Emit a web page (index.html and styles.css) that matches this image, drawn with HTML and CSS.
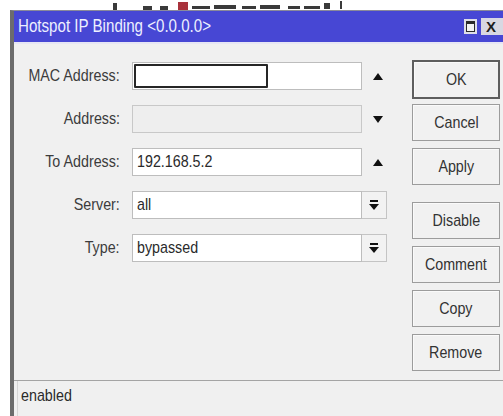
FILE: index.html
```html
<!DOCTYPE html>
<html>
<head>
<meta charset="utf-8">
<title>Hotspot IP Binding</title>
<link rel="stylesheet" href="styles.css">
</head>
<body>
<div class="strip">
  <span class="frag frag-a"></span>
  <span class="frag frag-b"></span>
  <span class="frag frag-c"></span>
  <span class="frag frag-red"></span>
  <span class="frag frag-t1"></span>
  <span class="frag frag-t2"></span>
  <span class="frag frag-t3"></span>
  <span class="frag frag-t4"></span>
  <span class="frag frag-t5"></span>
  <span class="frag frag-t6"></span>
  <span class="frag frag-t7"></span>
  <span class="frag frag-t8"></span>
</div>
<div class="window">
  <div class="titlebar">
    <span class="title"><span class="cx">Hotspot IP Binding &lt;0.0.0.0&gt;</span></span>
    <div class="tb-btns">
      <span class="tb-max"><span class="tb-max-inner"></span></span>
      <span class="tb-close">X</span>
    </div>
  </div>
  <div class="panel">
    <div class="form">
      <div class="row">
        <span class="label"><span class="cx">MAC Address:</span></span>
        <div class="field"><span class="mac-part"></span></div>
        <span class="spin"><svg width="10" height="7" viewBox="0 0 10 7"><polygon points="5,0 10,7 0,7" fill="#111"/></svg></span>
      </div>
      <div class="row">
        <span class="label"><span class="cx">Address:</span></span>
        <div class="field disabled"></div>
        <span class="spin"><svg width="10" height="7" viewBox="0 0 10 7"><polygon points="0,0 10,0 5,7" fill="#111"/></svg></span>
      </div>
      <div class="row">
        <span class="label"><span class="cx">To Address:</span></span>
        <div class="field"><span class="cx">192.168.5.2</span></div>
        <span class="spin"><svg width="10" height="7" viewBox="0 0 10 7"><polygon points="5,0 10,7 0,7" fill="#111"/></svg></span>
      </div>
      <div class="row">
        <span class="label"><span class="cx">Server:</span></span>
        <div class="field"><span class="cx">all</span></div>
        <span class="drop"><svg width="10" height="12" viewBox="0 0 10 12"><rect x="1" y="1" width="8" height="2" fill="#111"/><polygon points="0,5 10,5 5,11" fill="#111"/></svg></span>
      </div>
      <div class="row">
        <span class="label"><span class="cx">Type:</span></span>
        <div class="field"><span class="cx">bypassed</span></div>
        <span class="drop"><svg width="10" height="12" viewBox="0 0 10 12"><rect x="1" y="1" width="8" height="2" fill="#111"/><polygon points="0,5 10,5 5,11" fill="#111"/></svg></span>
      </div>
    </div>
    <div class="buttons">
      <div class="btn btn-default"><span class="cx">OK</span></div>
      <div class="btn"><span class="cx">Cancel</span></div>
      <div class="btn"><span class="cx">Apply</span></div>
      <div class="btn btn-spaced"><span class="cx">Disable</span></div>
      <div class="btn"><span class="cx">Comment</span></div>
      <div class="btn"><span class="cx">Copy</span></div>
      <div class="btn"><span class="cx">Remove</span></div>
    </div>
  </div>
  <div class="status"><span class="status-cell"><span class="cx">enabled</span></span></div>
</div>
</body>
</html>
```
FILE: styles.css
```css
html, body {
  margin: 0;
  padding: 0;
}

body {
  width: 503px;
  height: 416px;
  overflow: hidden;
  background: #ffffff;
  font-family: "Liberation Sans", Arial, sans-serif;
  font-size: 17px;
  color: #333;
}

/* condensed dialog lettering */
.cx {
  display: inline-block;
  white-space: nowrap;
  transform: scaleX(0.84);
  transform-origin: left center;
}

/* edge of the window list behind the dialog */
.strip {
  height: 10px;
  display: flex;
  align-items: flex-end;
  padding-left: 113px;
  overflow: hidden;
}

.frag {
  display: block;
  background: #3a3a3a;
  margin-right: 4px;
}

.frag-a { width: 4px; height: 7px; margin-right: 26px; }
.frag-b { width: 9px; height: 4px; margin-right: 8px; }
.frag-c { width: 8px; height: 4px; margin-right: 10px; }
.frag-red { width: 10px; height: 8px; background: #a8323c; }
.frag-t1 { width: 18px; height: 3px; margin-bottom: 1px; }
.frag-t2 { width: 22px; height: 4px; margin-bottom: 1px; margin-right: 6px; }
.frag-t3 { width: 14px; height: 3px; margin-bottom: 1px; }
.frag-t4 { width: 20px; height: 4px; margin-bottom: 1px; margin-right: 8px; }
.frag-t5 { width: 12px; height: 3px; margin-bottom: 1px; }
.frag-t6 { width: 16px; height: 3px; margin-bottom: 1px; }
.frag-t7 { width: 6px; height: 6px; margin-bottom: 1px; }
.frag-t8 { width: 2px; height: 8px; margin-bottom: 1px; margin-left: 6px; }

/* dialog window */
.window {
  margin-left: 10px;
  border-left: 4px solid #6c6c6c;
  border-top: 1px solid #8a8a9a;
  height: 406px;
  display: flex;
  flex-direction: column;
  background: #f0f0f0;
}

.titlebar {
  height: 31px;
  flex: none;
  background: #4747d4;
  display: flex;
  align-items: center;
  justify-content: space-between;
  padding-left: 4px;
  box-sizing: border-box;
}

.title {
  color: #eef0ff;
  font-size: 18px;
  flex: 1;
}

.tb-btns {
  display: flex;
  align-items: center;
  gap: 4px;
}

.tb-max {
  width: 13px;
  height: 15px;
  background: #dedee8;
  box-sizing: border-box;
  padding: 2px;
  display: flex;
}

.tb-max-inner {
  flex: 1;
  border: 1px solid #2a2a2a;
  border-top-width: 3px;
  background: #f4f4f4;
}

.tb-close {
  width: 22px;
  height: 17px;
  background: #d8d8e2;
  color: #1e1e1e;
  font-weight: bold;
  font-size: 15px;
  line-height: 17px;
  padding-left: 5px;
  box-sizing: border-box;
}

/* form area */
.panel {
  height: 338px;
  flex: none;
  display: flex;
  align-items: flex-start;
  padding-top: 16px;
  box-sizing: border-box;
  border-top: 2px solid #e6e6f4;
}

.form {
  display: flex;
  flex-direction: column;
  gap: 15px;
  margin-top: 2px;
}

.row {
  display: flex;
  align-items: center;
  height: 28px;
}

.label {
  width: 106px;
  margin-right: 12px;
  color: #3c3c3c;
  display: flex;
  justify-content: flex-end;
}

.label .cx {
  transform-origin: right center;
}

.field {
  width: 230px;
  height: 28px;
  box-sizing: border-box;
  background: #ffffff;
  border: 1px solid #bdbdbd;
  padding-left: 4px;
  display: flex;
  align-items: center;
  color: #2a2a2a;
  overflow: hidden;
}

.field.disabled {
  background: #eeeeee;
  border-color: #c8c8c8;
}

.row:first-child .field {
  padding-left: 1px;
}

.mac-part {
  width: 134px;
  height: 24px;
  box-sizing: border-box;
  border: 2px solid #262626;
  border-radius: 1px;
}

.spin {
  width: 50px;
  padding-left: 11px;
  box-sizing: border-box;
  display: flex;
  align-items: center;
}

.drop {
  width: 25px;
  height: 28px;
  margin-right: 25px;
  box-sizing: border-box;
  background: #f2f2f2;
  border: 1px solid #c4c4c4;
  border-left: none;
  display: flex;
  align-items: center;
  justify-content: center;
}

/* action buttons */
.buttons {
  width: 88px;
  display: flex;
  flex-direction: column;
  gap: 7px;
}

.btn {
  height: 37px;
  box-sizing: border-box;
  border: 1px solid #9c9c9c;
  box-shadow: inset 1px 1px 0 #fafafa;
  background: #f1f1f1;
  display: flex;
  align-items: center;
  justify-content: center;
  color: #333;
}

.btn .cx {
  transform-origin: center center;
}

.btn-default {
  height: 39px;
  border: 2px solid #5e5e5e;
  margin-bottom: -2px;
}

.btn-spaced {
  margin-top: 10px;
}

/* status line */
.status {
  flex: 1;
  border-top: 1px solid #a4a4a4;
  display: flex;
  padding-left: 3px;
}

.status-cell {
  flex: 1;
  border-left: 1px solid #d6d6d6;
  padding-left: 3px;
  padding-top: 5px;
  color: #2a2a2a;
}
```
